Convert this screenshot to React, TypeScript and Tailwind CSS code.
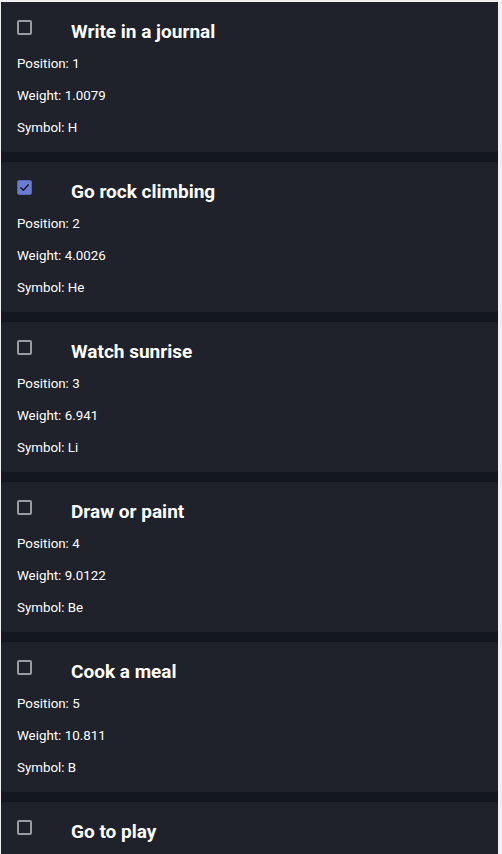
import { useState } from 'react';

type Item = {
  title: string;
  position: number;
  weight: number;
  symbol: string;
  done: boolean;
};

const ITEMS: Item[] = [
  { title: 'Write in a journal', position: 1, weight: 1.0079, symbol: 'H', done: false },
  { title: 'Go rock climbing', position: 2, weight: 4.0026, symbol: 'He', done: true },
  { title: 'Watch sunrise', position: 3, weight: 6.941, symbol: 'Li', done: false },
  { title: 'Draw or paint', position: 4, weight: 9.0122, symbol: 'Be', done: false },
  { title: 'Cook a meal', position: 5, weight: 10.811, symbol: 'B', done: false },
  { title: 'Go to play', position: 6, weight: 12.0107, symbol: 'C', done: false },
];

function Check({ checked, onToggle }: { checked: boolean; onToggle: () => void }) {
  return (
    <button
      type="button"
      onClick={onToggle}
      className={
        checked
          ? 'mt-[2px] flex h-[15px] w-[15px] shrink-0 items-center justify-center rounded-[2px] border border-[#5566b8] bg-[#6a7dd4]'
          : 'mt-[2px] h-[15px] w-[15px] shrink-0 rounded-[2px] border-2 border-[#9a9ca1] bg-transparent'
      }
    >
      {checked && (
        <svg viewBox="0 0 12 12" className="h-[11px] w-[11px]" fill="none">
          <path d="M2 6.3 4.8 9 10 3.2" stroke="#161a26" strokeWidth="1.7" strokeLinecap="round" strokeLinejoin="round" />
        </svg>
      )}
    </button>
  );
}

export default function App() {
  const [items, setItems] = useState(ITEMS);

  const toggle = (i: number) =>
    setItems(prev => prev.map((it, idx) => (idx === i ? { ...it, done: !it.done } : it)));

  return (
    <div className="min-h-screen bg-[#f0f0f0] pt-[2px] pl-[1px] pr-[4px] pb-[2px] font-['Roboto',sans-serif]">
      <div className="flex flex-col gap-[10px] bg-[#131720]">
        {items.map((it, i) => (
          <div key={it.title} className="h-[150px] rounded-[3px] bg-[#1f222a] pl-[16px] pt-[16px] text-white">
            <div className="flex h-[27px] items-start">
              <Check checked={it.done} onToggle={() => toggle(i)} />
              <h2 className="ml-[39px] text-[19px] font-bold leading-[28px]">{it.title}</h2>
            </div>
            <div className="mt-[9px] flex flex-col gap-[13px] text-[13.33px] leading-[19px]">
              <p>Position: {it.position}</p>
              <p>Weight: {it.weight}</p>
              <p>Symbol: {it.symbol}</p>
            </div>
          </div>
        ))}
      </div>
    </div>
  );
}
